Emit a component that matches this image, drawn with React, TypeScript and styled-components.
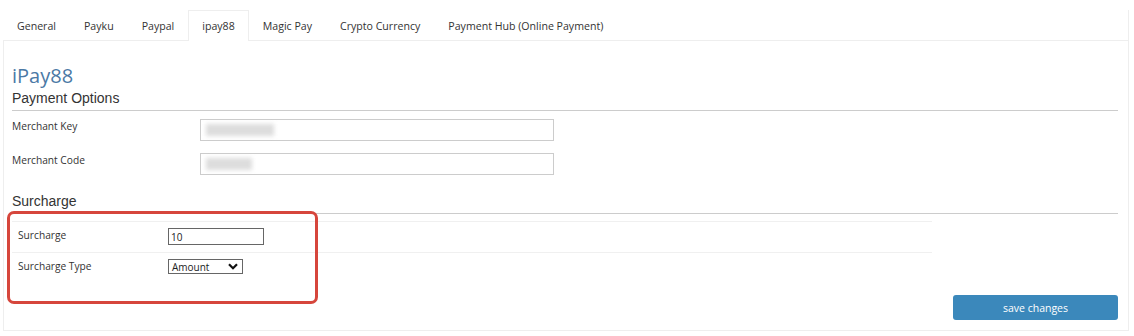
import React from 'react';
import styled, {createGlobalStyle} from "styled-components";

const GlobalStyle = createGlobalStyle`
  body {
    margin: 0;
    background: #fff;
    font-family: "Open Sans", "Liberation Sans", sans-serif;
    color: #333;
  }
`

const tabs = ['General', 'Payku', 'Paypal', 'ipay88', 'Magic Pay', 'Crypto Currency', 'Payment Hub (Online Payment)']

const Chevron = () => (
    <svg width="10" height="7" viewBox="0 0 10 7">
        <path d="M1 1.2 L5 5.2 L9 1.2" fill="none" stroke="#111" strokeWidth="2.2"/>
    </svg>
)

export default function App() {
    return (
        <>
            <GlobalStyle/>
            <Page>
                <TabBar>
                    {tabs.map(t => <Tab key={t} active={t === 'ipay88'}>{t}</Tab>)}
                </TabBar>
                <Panel>
                    <Title>iPay88</Title>
                    <SectionTitle>Payment Options</SectionTitle>
                    <FieldRow>
                        <Label>Merchant Key</Label>
                        <MaskedInput><Smudge w={68}/></MaskedInput>
                    </FieldRow>
                    <FieldRow>
                        <Label>Merchant Code</Label>
                        <MaskedInput><Smudge w={46}/></MaskedInput>
                    </FieldRow>
                    <SectionTitle top={17}>Surcharge</SectionTitle>
                    <SurchargeArea>
                        <SmallTable>
                            <SmallRow>
                                <SmallLabel>Surcharge</SmallLabel>
                                <SmallInput defaultValue="10"/>
                            </SmallRow>
                            <SmallRow>
                                <SmallLabel>Surcharge Type</SmallLabel>
                                <SelectBox>
                                    <span>Amount</span>
                                    <Chevron/>
                                </SelectBox>
                            </SmallRow>
                        </SmallTable>
                        <Highlight/>
                    </SurchargeArea>
                    <Footer>
                        <SaveButton>save changes</SaveButton>
                    </Footer>
                </Panel>
            </Page>
        </>
    );
}

const Page = styled.div`
  padding: 10px 0 0 3px;
  width: 1126px;
`

const TabBar = styled.div`
  display: flex;
  height: 30px;
  border-bottom: 1px solid #eee;
  border-right: 1px solid #eee;
`

const Tab = styled.div<{active?: boolean}>`
  display: flex;
  align-items: center;
  padding: 0 13px;
  font-size: 10.6px;
  color: #333;
  border: 1px solid ${p => p.active ? '#eee' : 'transparent'};
  border-bottom: none;
  background: #fff;
  margin-bottom: ${p => p.active ? '-1px' : '0'};
  height: ${p => p.active ? '31px' : '30px'};
  box-sizing: border-box;
`

const Panel = styled.div`
  border: 1px solid #eee;
  border-top: none;
  padding: 21px 10px 10px 8px;
  width: 1106px;
`

const Title = styled.div`
  font-size: 20px;
  color: #4b79a5;
  line-height: 27px;
`

const SectionTitle = styled.div<{top?: number}>`
  font-family: "Liberation Sans", Arial, sans-serif;
  font-size: 14px;
  line-height: 18px;
  margin-top: ${p => p.top || 0}px;
  padding-bottom: 3px;
  border-bottom: 1px solid #ccc;
`

const FieldRow = styled.div`
  display: flex;
  align-items: flex-start;
  margin-top: 8px;
  & + & {
    margin-top: 12px;
  }
`

const Label = styled.div`
  width: 188px;
  font-size: 10.2px;
  line-height: 14px;
`

const MaskedInput = styled.div`
  width: 354px;
  height: 22px;
  border: 1px solid #ccc;
  box-sizing: border-box;
  display: flex;
  align-items: center;
  padding-left: 5px;
`

const Smudge = styled.div<{w: number}>`
  width: ${p => p.w}px;
  height: 12px;
  background: #ddd;
  filter: blur(2px);
`

const SurchargeArea = styled.div`
  position: relative;
  padding-top: 7px;
`

const SmallTable = styled.div`
  width: 920px;
`

const SmallRow = styled.div`
  display: flex;
  align-items: flex-start;
  border-top: 1px solid #f0f0f0;
  height: 31px;
  padding: 6px 0 0 6px;
  box-sizing: border-box;
`

const SmallLabel = styled.div`
  width: 150px;
  font-size: 10.2px;
  line-height: 14px;
`

const SmallInput = styled.input`
  width: 96px;
  height: 17px;
  box-sizing: border-box;
  border: 1px solid #666;
  padding: 0 2px;
  font-family: "Open Sans", sans-serif;
  font-size: 10px;
  color: #222;
  outline: none;
`

const SelectBox = styled.div`
  width: 75px;
  height: 15px;
  box-sizing: border-box;
  border: 1px solid #666;
  display: flex;
  align-items: center;
  justify-content: space-between;
  padding: 0 4px 0 3px;
  font-size: 10px;
  color: #222;
`

const Highlight = styled.div`
  position: absolute;
  left: -5px;
  top: -3px;
  width: 311px;
  height: 93px;
  box-sizing: border-box;
  border: 3px solid #d6463c;
  border-radius: 7px;
`

const Footer = styled.div`
  display: flex;
  justify-content: flex-end;
  margin-top: 12px;
`

const SaveButton = styled.button`
  width: 165px;
  height: 25px;
  background: #3b88bb;
  color: #fff;
  border: none;
  border-radius: 3px;
  font-family: "Open Sans", sans-serif;
  font-size: 10.5px;
`
